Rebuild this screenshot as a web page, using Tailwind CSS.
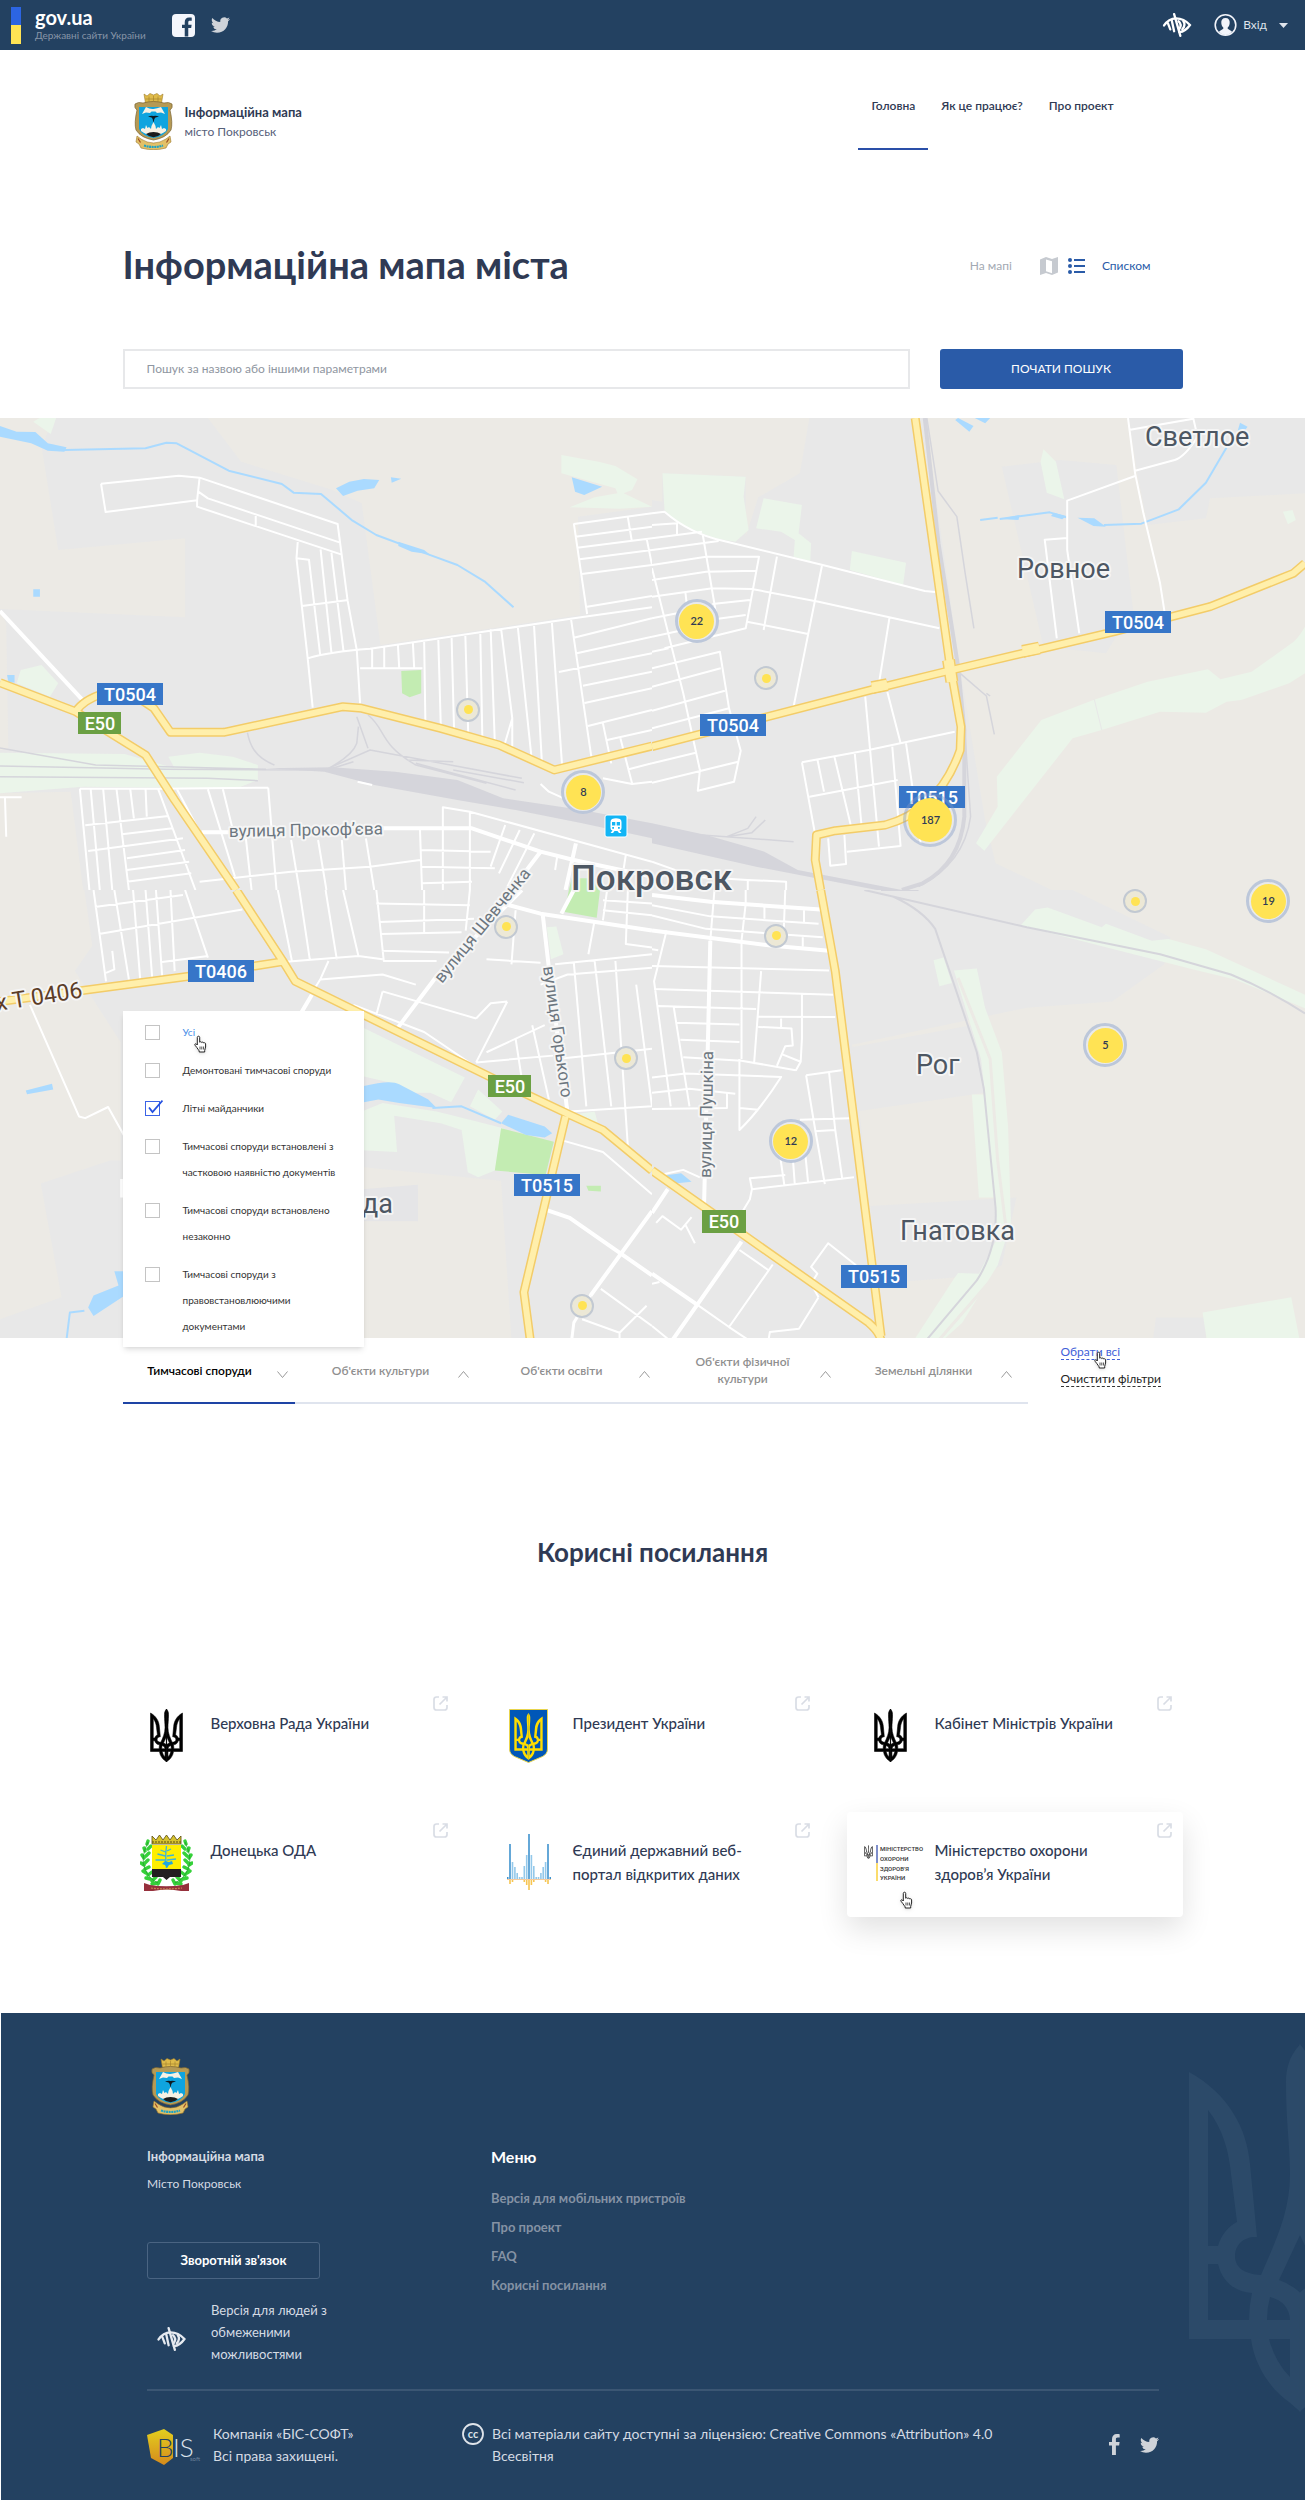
<!DOCTYPE html>
<html lang="uk">
<head>
    <meta charset="UTF-8">
    <meta name="viewport" content="width=device-width, initial-scale=1.0">
    <title>Інформаційна мапа міста</title>
    <script src="https://cdn.jsdelivr.net/npm/@tailwindcss/browser@4"></script>
</head>
<body class="bg-white font-['Lato','Noto_Sans',sans-serif] text-[#2f3a54]">

<!-- Icon sprite -->
<svg class="hidden" aria-hidden="true">
    <symbol id="trident" viewBox="0 0 222 368">
        <path id="trident-half" fill-rule="evenodd" d="M111.500 0C100 12 97 25 97 38C97 80 101 100 101 130C101 170 85 200 72 231C56 230 46 224 46 212C46 200 56 192 68 193L61 120C58 85 40 50 0 28V295H62C66 325 85 348 100 358L111.500 368zM19 66C34 85 40 108 42 130L48 178C38 183 32 192 29 202H19zM19 220H29C34 240 48 248 63 249Q60 262 60 276H19zM111.500 190L90 236Q102 240 111.500 249zM81 253Q100 258 101 276H78Q78 264 81 253zM80 295H101V333Q86 318 80 295z"/>
        <use href="#trident-half" transform="matrix(-1 0 0 1 222 0)"/>
    </symbol>
    <symbol id="twitter" viewBox="0 0 24 20">
        <path transform="translate(0 -2)" d="M23.953 4.57a10 10 0 01-2.825.775 4.958 4.958 0 002.163-2.723c-.951.555-2.005.959-3.127 1.184a4.92 4.92 0 00-8.384 4.482C7.69 8.095 4.067 6.13 1.64 3.162a4.822 4.822 0 00-.666 2.475c0 1.71.87 3.213 2.188 4.096a4.904 4.904 0 01-2.228-.616v.06a4.923 4.923 0 003.946 4.827 4.996 4.996 0 01-2.212.085 4.936 4.936 0 004.604 3.417 9.867 9.867 0 01-6.102 2.105c-.39 0-.779-.023-1.17-.067a13.995 13.995 0 007.557 2.209c9.053 0 13.998-7.496 13.998-13.985 0-.21 0-.42-.015-.63A9.935 9.935 0 0024 4.59z"/>
    </symbol>
    <symbol id="facebook" viewBox="0 0 11 21">
        <path d="M3 21V11.500H0V8h3V5.300C3 2 4.800 0 7.800 0 9.200 0 10.400.1 10.700.2v3.400H8.700C7.200 3.600 6.900 4.300 6.900 5.400V8h3.700l-.5 3.500H6.900V21z"/>
    </symbol>
    <symbol id="eye" viewBox="0 0 30 25">
        <g fill="none" stroke="currentColor" stroke-width="2.400" stroke-linecap="round">
            <path d="M1.500 13C5 7.500 9.500 5.500 14 5.500S24 7.500 28.500 12.500C25 17.500 21.500 19.500 17.500 20"/>
            <path d="M12 1.200L18.500 23.800"/>
            <path d="M5.500 10.500L8 17M9.500 7.500L12 19"/>
            <path d="M16.500 8.500Q20.500 12 17.500 16.500M21.500 8.500Q24.500 12.500 20.500 17"/>
        </g>
    </symbol>
    <symbol id="external" viewBox="0 0 15 15">
        <path d="M6 1H3.500Q1 1 1 3.500V11.500Q1 14 3.500 14H11.500Q14 14 14 11.500V9M9.500 1H14V5.500M14 1L6.500 8.500" fill="none" stroke="#d9dde5" stroke-width="1.700"/>
    </symbol>
    <symbol id="hand" viewBox="0 0 16 18">
        <path d="M5.500 1.200c.7 0 1.200.5 1.200 1.200v4.800c.2-.7 1.900-.6 2 .3.4-.7 1.900-.4 2 .5.500-.5 1.900-.2 1.900.8v3.300c0 1.400-.9 2-.9 3.300V17H6.200v-1.100c-.9-1-1.400-2.200-2.300-3.300L2 10.200c-.7-1 .5-1.900 1.300-1.200l1 1V2.400c0-.7.500-1.200 1.200-1.200z" fill="#fff" stroke="#222" stroke-width="1"/>
        <path d="M7 11.500v3M8.800 11.500v3M10.600 11.500v3" stroke="#222" stroke-width=".8"/>
    </symbol>
    <symbol id="coat" viewBox="0 0 39 57">
        <path d="M10 1l3 2 3-2.500 3.500 1.500L23 .5 26 3l3-2-1.500 9h-16z" fill="#dfbb4a" stroke="#a07c28" stroke-width=".6"/>
        <path d="M11.500 6h16M15 3.500v5M19.500 3v5M24 3.500v5" stroke="#a07c28" stroke-width=".6"/>
        <path d="M1 11Q4 8.500 9 10q5-1.500 10.500-1.500T30 10q5-1.500 8 1 1 4-2 6 3 13 1 20-5 8-17.500 10Q7 45 2 37 0 30 3 17 0 15 1 11z" fill="#b59a55" stroke="#7a6330" stroke-width=".7"/>
        <path d="M5 14h29v22q-3 7-14.500 9Q8 43 5 36z" fill="#0fa4df"/>
        <path d="M8 21l4-7q4 2.500 7.500 2T27 14l4 7-4-1.500-4 .5-1.500-1.500h-4L16 20l-4-.5z" fill="#f7f1e4"/>
        <path d="M14 23.500q3-1 5.500-.5 2.500-.5 5.500.5l-3.500 1-2 2-2-2z" fill="#0d1a22"/>
        <path d="M18.500 25l1 5 1-5" fill="#0d1a22"/>
        <path d="M7 38v-2l2-1 2 1 1-4 1.500 3 1.500-1 2 2 .5-3 2-4 2 4 .5 3 2-2 1.500 1L27 32l1 4 2-1 2 1v2q-5 4-12.500 4.500Q12 42 7 38z" fill="#f7f1e4"/>
        <path d="M12 41q3-2 7.500-2t7.500 2q-3 3-7.500 3.300Q15 44 12 41z" fill="#1c1c1c"/>
        <path d="M3 43l4 3q6 4 12.500 4T32 46l4-3 1 6-3 2-2 4q-6 1.700-12.500 1.700T7 55l-2-4-3-2z" fill="#e2c168" stroke="#9a7628" stroke-width=".6"/>
        <path d="M10 52.500q9.500 3 19 0" fill="none" stroke="#1ba3c6" stroke-width="2.200" stroke-dasharray="2 .6"/>
        <path d="M4 45.500l2.500 4M35 45.500l-2.500 4" stroke="#9c4a24" stroke-width="1.200"/>
    </symbol>
</svg>

<!-- Top bar -->
<div class="flex h-[50px] items-center bg-[#234161] px-[11px] text-white">
    <a href="#" class="flex items-center gap-[14px]">
        <svg class="h-[37px] w-[10px]" viewBox="0 0 10 37" aria-hidden="true">
            <rect width="10" height="18" fill="#2c65e3"/>
            <rect y="18" width="10" height="19" fill="#ffe354"/>
        </svg>
        <span class="flex flex-col">
            <span class="text-xl leading-5 font-bold">gov.ua</span>
            <span class="text-[10px] leading-4 text-[#8795a8]">Державні сайти України</span>
        </span>
    </a>
    <a href="#" aria-label="Facebook" class="ml-[26px] flex h-[23px] w-[23px] items-end justify-center rounded bg-[#f4f6fc] pl-2">
        <svg class="h-5 w-[10px] fill-[#234161]"><use href="#facebook"/></svg>
    </a>
    <a href="#" aria-label="Twitter" class="ml-4"><svg class="h-4 w-[19px] fill-[#cfd3d9]"><use href="#twitter"/></svg></a>
    <button type="button" aria-label="Версія для людей з обмеженими можливостями" class="mr-[22px] ml-auto">
        <svg class="h-6 w-[30px] text-white"><use href="#eye"/></svg>
    </button>
    <button type="button" class="flex items-center pr-1.5 text-xs text-[#dfe4ec]">
        <svg class="mr-1.5 h-6 w-[23px]" viewBox="0 0 23 24" aria-hidden="true">
            <circle cx="11.500" cy="12" r="10.300" fill="none" stroke="#f2f4fa" stroke-width="1.600"/>
            <path d="M11.500 5C8.500 5 7 7 7.300 10c.2 2 .9 3.500 2 4.500v1.300L5 18.500Q7.500 22 11.500 22t6.500-3.500l-4.300-2.700v-1.300c1.100-1 1.800-2.500 2-4.500C16 7 14.500 5 11.500 5z" fill="#f2f4fa"/>
        </svg>
        Вхід
        <svg class="ml-3 h-[5px] w-[9px] fill-[#dfe4ec]" viewBox="0 0 9 5" aria-hidden="true"><path d="M0 0h9L4.500 5z"/></svg>
    </button>
</div>

<!-- Header -->
<header class="mx-auto flex max-w-[1060px] items-start justify-between pt-[43px] pr-14 pl-[11px]">
    <a href="#" class="flex items-center gap-3">
        <svg class="h-[57px] w-[39px]"><use href="#coat"/></svg>
        <span class="flex flex-col">
            <span class="text-[13px] leading-5 font-bold">Інформаційна мапа</span>
            <span class="text-xs leading-5 text-[#56607a]">місто Покровськ</span>
        </span>
    </a>
    <nav class="flex text-xs leading-[18px] font-semibold">
        <a href="#" class="h-[57px] border-b-2 border-[#2a4fa8] px-[13px] pt-1">Головна</a>
        <a href="#" class="px-[13px] pt-1">Як це працює?</a>
        <a href="#" class="px-[13px] pt-1">Про проект</a>
    </nav>
</header>

<main>
    <div class="mx-auto max-w-[1060px]">
        <div class="mt-[90px] flex items-center justify-between pr-8">
            <h1 class="text-[38px] leading-[48px] font-bold">Інформаційна мапа міста</h1>
            <div class="flex items-center pt-1 text-xs">
                <a href="#" class="text-[#a3a9b3]">На мапі</a>
                <svg class="ml-7 h-[18px] w-[18px]" viewBox="0 0 18 18" aria-hidden="true">
                    <path fill-rule="evenodd" d="M0 2.500L6 0l6 2L18 0v15.500L12 18l-6-2-6 2zM6 2.500v11.700l6 2V4.300z" fill="#c6cad0"/>
                </svg>
                <svg class="ml-[10px] h-4 w-[17px] fill-[#2a5ba8]" viewBox="0 0 17 16" aria-hidden="true">
                    <circle cx="2" cy="2" r="2"/><circle cx="2" cy="8" r="2"/><circle cx="2" cy="14" r="2"/>
                    <path d="M6 1h11v2H6zM6 7h11v2H6zM6 13h11v2H6z"/>
                </svg>
                <a href="#" class="ml-[17px] text-[#2a5ba8]">Списком</a>
            </div>
        </div>
        <form class="mt-[61px] mb-[29px] flex gap-[30px]">
            <input type="search" aria-label="Пошук за назвою або іншими параметрами" placeholder="Пошук за назвою або іншими параметрами"
                   class="h-10 grow border-2 border-[#e7e8ea] px-[22px] pb-px text-xs placeholder:text-[#8f96a1] focus:outline-none">
            <button type="submit" class="h-10 w-[243px] rounded-[3px] bg-[#2a5ba8] text-xs text-white">ПОЧАТИ ПОШУК</button>
        </form>
    </div>

    <!-- Map -->
    <section class="relative overflow-hidden" aria-label="Мапа">
        <svg class="block h-auto w-full" viewBox="0 418 1305 920" aria-hidden="true">
            <rect y="418" width="1305" height="920" fill="#e8e8e8"/>

            <!-- north-west tile -->
            <svg y="410" width="652" height="480" viewBox="0 0 1568 1440" preserveAspectRatio="none">
                <path fill="#eceae5" d="M0 24H130L100 110 140 420 445 385V622L0 597zM500 24L580 155 800 240 870 280 915 705 1395 615 1390 320 1568 290V24zM0 600L15 640 20 1020H0zM0 1150L170 1145 200 1440H0z"/>
                <path fill="#ebf5ea" d="M80 35L95 24H135L122 72zM1350 135L1440 155 1480 168 1533 208 1520 240 1500 250 1568 290 1490 296 1370 292 1430 262 1485 250 1480 235 1350 190zM50 780L100 765 140 820 120 860 40 820zM0 1028L300 1032 420 1075 405 1040 480 1028 560 1040 620 1065V1110L570 1135 200 1130 0 1150z"/>
                <path fill="#c3ecb2" d="M965 783L1013 780V850L985 862 967 850zM1375 1405H1440V1440H1368z"/>
                <path fill="#aadaff" d="M0 48L40 65 85 66 115 100 160 112 155 125 115 122 75 100 0 80zM808 235L840 215 875 207 912 210 900 235 860 242 825 258zM940 202L965 206 942 218zM1375 202L1448 230 1405 255 1383 245zM958 395L1020 420 1033 433 990 425 958 408zM80 538h16v22h-16zM17 795H35V818L20 815z"/>
                <path fill="#d5d5db" d="M640 1075L800 1072 950 1085 1100 1110 1210 1165 1400 1200 1568 1240V1285L1400 1240 1240 1200 1100 1170 900 1125 780 1085z"/>
                <g fill="none" stroke-linejoin="round">
                    <path vector-effect="non-scaling-stroke" stroke="#aadaff" stroke-width="2" d="M155 120L350 115 400 98 425 100 550 182 678 222 706 248 772 252 848 332 905 375 1030 433 1100 465 1165 514 1235 592"/>
                    <path vector-effect="non-scaling-stroke" stroke="#d5d5db" stroke-width="1.500" d="M0 1014L230 1065 640 1078M0 1068L400 1078 800 1080M0 1100L500 1105 620 1112M595 968C600 1000 610 1040 660 1065M858 920L885 1015M885 915C930 960 910 1000 1000 1065L1170 1120M862 950L858 1000C850 1030 820 1055 790 1075L890 1020 1255 1105M980 1050L1090 1055M1000 1060L1240 1140M1090 1080L1260 1118M850 1055L800 1075"/>
                    <path vector-effect="non-scaling-stroke" stroke="#fff" stroke-width="2" d="M243 221L430 197 480 203 812 342 836 572 858 720 866 880M243 221L254 306 474 271 480 203M476 244L500 265 818 398M474 271V290L822 434M615 318V348M716 396L713 445 740 745 752 893M713 445L743 449 770 735M771 418L797 728M797 428L826 722M726 588L838 570M740 745Q790 725 890 716L1380 625 1568 592M866 775H1016M895 716V772M924 712V772M957 706L960 772M993 700L996 772M1020 690L1023 935M1054 685L1060 945M1086 680L1092 960M1119 672L1126 970M1155 665L1160 985M1180 658L1190 998M1205 655L1232 925V1015M1232 925L1213 1005M1245 648L1278 1040M1284 640L1303 1052M1327 633L1352 1070M1373 625L1422 1040M1380 340L1412 612M1380 342L1568 310M1384 380L1568 350M1388 413L1568 385M1394 448L1568 420M1399 492L1568 465M1412 590L1568 558M1510 322L1519 390M1555 385L1568 465M1380 683L1568 625M1387 730L1568 680M1344 786L1568 730M1402 827L1568 785M1406 879L1568 835M1414 948L1568 900M1450 940L1470 1060M1460 990L1568 960M1492 985L1520 1120M1512 1078L1568 1060M1450 1105L1520 1122 1568 1115M1300 1122L1320 1145 1400 1190M860 1115L895 1125M192 1136H380L645 1133M192 1136L215 1440M218 1136L240 1440M248 1135L270 1440M280 1135L310 1440M313 1135L322 1225M350 1135L353 1220M380 1136L470 1440M425 1136L480 1265M205 1246L405 1218M212 1323L440 1285M293 1273L415 1255M305 1345L445 1320M305 1380L455 1355M305 1415L460 1390M500 1138L565 1400M536 1138L560 1260M645 1133L665 1440M590 1270L605 1440M480 1415L700 1385 890 1370 1010 1350M700 1290L720 1440M765 1290L785 1440M822 1290L832 1440M880 1285L900 1440M1010 1258L1015 1440M1065 1440V1192L1130 1205V1440M1013 1320L1180 1325M1013 1370L1190 1375M1015 1420L1135 1415M1130 1205L1568 1355M1215 1245L1180 1370M1250 1260L1200 1390M1285 1270L1220 1430M1340 1340L1335 1380M1505 1335L1500 1375M0 1162H52M12 1165L15 1280"/>
                    <path vector-effect="non-scaling-stroke" stroke="#fff" stroke-width="4" d="M0 603L200 872M485 1267H570M905 1255H1135L1300 1325 1380 1350 1568 1400M1385 1300L1360 1440M1300 1325L1230 1440"/>
                    <path id="nw-highway" vector-effect="non-scaling-stroke" d="M0 818L182 905 350 1035 420 1170 568 1440M182 905Q200 870 250 850L340 870 370 895 410 967H538L825 890 870 895 1060 955 1200 1005 1333 1080 1568 1008"/>
                    <g stroke="#f3cc68" stroke-width="9"><use href="#nw-highway"/></g>
                    <g stroke="#ffefab" stroke-width="6"><use href="#nw-highway"/></g>
                </g>
            </svg>

            <!-- north-east tile -->
            <svg x="652" y="410" width="653" height="480" viewBox="0 0 1568 1440" preserveAspectRatio="none">
                <path fill="#eceae5" d="M0 24H378L355 190 255 262 225 380V200L25 190V275L0 270zM655 24L740 780 800 1230 825 1360 960 1440H1568V250L1340 265 1330 325 1190 345 1165 190 1145 24z"/>
                <path fill="#e8e8e8" d="M840 170L980 150 1115 165 1155 600 1090 730 940 710z"/>
                <path fill="#ebf5ea" d="M25 190L225 200 220 260 232 360 200 395 150 385 60 340 30 300zM268 265L360 285 352 370 382 400 380 455 340 440 343 390 310 365 250 355zM480 423L610 458 603 525 475 480zM940 118L970 155 990 268 948 248 933 155zM1515 305L1538 300 1546 330 1527 343zM1568 650Q1550 690 1530 705L1440 785 1365 808 1335 778 1190 815 1060 870 935 930 828 1100 830 1190 778 1300 798 1322 1010 985 1080 960 1220 905 1330 908 1380 875 1415 870 1530 820 1568 790z"/>
                <path fill="#aadaff" d="M728 30L735 24 772 48 762 65zM775 24H812L800 40zM835 327L883 315 880 330zM958 318L965 308 995 318 985 328zM1022 323L1062 325 1090 350 1060 348zM1412 38L1430 50 1418 72 1405 68z"/>
                <path fill="#d5d5db" d="M0 1240L130 1275 270 1325 350 1380 600 1440H540L250 1370 0 1300z"/>
                <g fill="none" stroke-linejoin="round">
                    <path vector-effect="non-scaling-stroke" stroke="#aadaff" stroke-width="2" d="M788 330L830 323M835 327L955 307 995 322M1085 345L1175 341 1265 298 1330 218 1380 112 1418 60"/>
                    <path vector-effect="non-scaling-stroke" stroke="#d5d5db" stroke-width="4" d="M655 24L688 400 735 770 750 960V1220Q740 1360 650 1420L600 1440"/>
                    <path vector-effect="non-scaling-stroke" stroke="#d5d5db" stroke-width="1.500" d="M660 24L687 243 732 320 752 490 773 655M740 790L803 858 822 973M803 850L812 858M752 980L765 1220Q750 1360 640 1430M180 1280L230 1255 250 1220M120 1275L340 1295M180 1280L240 1268 272 1230"/>
                    <path vector-effect="non-scaling-stroke" stroke="#e8e8e8" stroke-width="1" d="M1062 868L1080 960"/>
                    <path vector-effect="non-scaling-stroke" stroke="#fff" stroke-width="2" d="M1143 24L1160 190 1180 310 1220 520 1235 640M1145 60L1300 26 1310 80Q1280 140 1255 150L1160 182M1160 198L997 272V420L1026 670M997 384L943 389 972 685M0 310L30 305Q90 370 170 392L410 465 655 543 680 546M0 345L60 340V372M0 385L120 365M0 420L160 393M0 465L130 440H257L225 655 30 715M0 510L130 485 250 482M0 560L145 535 240 537 400 575 690 655M122 375L155 620M300 440L268 660M408 468L340 890M228 635L375 672M145 582L235 570M150 628L225 615M570 625L545 820M0 475L45 700 75 850 115 1080 110 1142 197 1115 213 1022 185 895 163 725 0 775M0 625L60 610M0 680L150 640M0 725L40 715M80 545L85 600M0 830L165 775M0 902L175 842M0 955L185 895M0 1060L105 1028M0 1118L207 1055M512 860L545 1310M565 845L597 1000M610 1000L645 1300M360 1057L520 1020 727 965M360 1057L392 1275M378 1160L590 1110M397 1047L413 1145M438 1040L480 1260M487 1032L503 1245M577 1010L597 1310M468 1325L597 1308M423 1285L428 1367 466 1362 462 1275M0 1355L100 1400 230 1410 322 1415V1440M230 1410V1440"/>
                    <path id="ne-highway" vector-effect="non-scaling-stroke" d="M632 24L715 760 742 950 740 1020Q690 1200 560 1245L440 1262 395 1275 392 1350 405 1440M0 1010L540 835 720 780 1110 665 1340 590 1540 490 1568 460"/>
                    <path id="ne-junction" vector-effect="non-scaling-stroke" d="M528 833L565 824M890 724L930 714M712 750L720 815"/>
                    <g stroke="#f3cc68" stroke-width="9"><use href="#ne-highway"/></g>
                    <g stroke="#f3cc68" stroke-width="13"><use href="#ne-junction"/></g>
                    <g stroke="#ffefab" stroke-width="10"><use href="#ne-junction"/></g>
                    <g stroke="#ffefab" stroke-width="6"><use href="#ne-highway"/></g>
                </g>
            </svg>

            <!-- south-west tile -->
            <svg y="890" width="652" height="530" viewBox="0 0 1568 1568" preserveAspectRatio="none">
                <path fill="#eceae5" d="M0 0H203L222 165 180 240 290 450V800H265L98 868 148 1205 0 1270zM875 820L1205 860 1230 1330H875z"/>
                <path fill="#e5e5e7" d="M870 885L1005 872V980H870z"/>
                <path fill="#ebf5ea" d="M870 405L1118 555 1085 628 1035 600 960 600 940 570 870 550zM870 655L920 630 1050 655 1130 680 1210 705 1190 830 1150 850 1125 835 1110 710 1060 690 948 668 955 775 870 770zM1150 590L1208 655 1190 680 1130 640zM1315 110L1338 108 1355 190 1325 205zM1375 665L1430 655 1440 700z"/>
                <path fill="#c3ecb2" d="M1368 0H1443L1435 82 1358 65zM1205 705L1332 745 1312 843 1190 830zM1410 875L1445 875V892L1415 890z"/>
                <path fill="#aadaff" d="M875 580Q940 560 960 575L1030 620 1050 645 960 630 910 620 875 628zM1222 665L1310 700 1328 720 1310 732 1265 725 1205 690zM62 593L125 573 128 590 65 604zM275 1128H300V1200L225 1260 212 1235 225 1200 285 1170z"/>
                <g fill="none" stroke-linejoin="round">
                    <path vector-effect="non-scaling-stroke" stroke="#aadaff" stroke-width="2" d="M1040 645L1110 640 1205 690M160 1330L168 1250 203 1245"/>
                    <path vector-effect="non-scaling-stroke" stroke="#fff" stroke-width="2" d="M72 340L190 670 205 675 260 642 300 730M225 0L255 270M238 130L583 58M228 50L440 15M275 0L310 265M320 0L337 262M350 0L366 260M375 0L390 255M410 0L420 240M445 0L500 200M390 213L500 195M255 245L275 235 270 180M668 0L702 210M720 0L745 205M783 0L810 205M825 0L862 195 920 205M680 213L862 195M790 210L770 265 920 250 1000 280M905 0L923 210 1050 210M905 40L1130 45M912 95L1140 85M915 130L1110 125M918 180L1080 185M750 305L770 265M1020 0V130M1130 0L1120 120M920 300L1145 380M905 370L920 300M1220 330L1145 510M1220 330L1180 335 1145 380M1170 205L1300 215M1240 60L1230 220M1300 280L1365 250 1568 230M1335 220L1568 190M1380 215L1410 640M1430 90L1415 190M1430 210L1470 640M1480 210L1510 760M1530 280L1568 640M1340 500L1568 470M1370 655L1568 640M1350 740L1450 775 1568 900M1445 1180L1568 1290M1400 1270L1490 1310V1330M1490 1310L1555 1230M1170 480L1310 400M1145 510L1330 490M1280 400L1320 620M1240 440L1260 600M1510 0L1505 160 1568 170M1460 0L1450 90M1450 30L1568 40M1450 60L1568 75M850 340L1020 420 1140 520"/>
                    <path vector-effect="non-scaling-stroke" stroke="#fff" stroke-width="4" d="M750 310L725 362M955 410L1050 255 1255 0M1210 40L1300 70 1568 120M1305 70L1320 230 1365 660M1310 945L1370 970 1568 1140M1568 950L1420 1200M294 855V910M1380 0L1350 70"/>
                    <path vector-effect="non-scaling-stroke" stroke="#fff" stroke-width="3" d="M1420 1200L1380 1280 1375 1330"/>
                    <path id="sw-highway" vector-effect="non-scaling-stroke" d="M568 0L680 210 710 270 1190 560 1370 665 1450 710 1568 830M0 330L455 255 680 212M1360 670L1260 1190 1275 1330"/>
                    <g stroke="#f3cc68" stroke-width="9"><use href="#sw-highway"/></g>
                    <g stroke="#ffefab" stroke-width="6"><use href="#sw-highway"/></g>
                </g>
            </svg>

            <!-- south-east tile -->
            <svg x="652" y="890" width="653" height="530" viewBox="0 0 1568 1568" preserveAspectRatio="none">
                <path fill="#eceae5" d="M1010 0L1245 140 1230 220 1105 330 900 348 480 458 560 1330H1568V0z"/>
                <path fill="#e8e8e8" d="M480 465L790 395 800 600 490 655zM525 935L875 910 840 1110 790 1140 545 1165zM1210 1265H1330V1330H1203z"/>
                <path fill="#ebf5ea" d="M885 105L920 58 950 52 1080 110 1090 100 1200 150 1240 145 1330 175 1568 310V350L1400 265 1300 235zM676 208L700 200 720 275 690 285zM725 238L780 232 800 350 840 480 855 700 862 985 830 1110 745 1280 700 1330H630L725 1150 735 1133 785 1135 825 1040 825 910H785L768 605H800L790 500zM1322 1250L1535 1205 1555 1330H1332z"/>
                <path fill="#aadaff" d="M30 845L70 838 95 863 55 868z"/>
                <g fill="none" stroke-linejoin="round">
                    <path vector-effect="non-scaling-stroke" stroke="#eceae5" stroke-width="3" d="M735 260L812 500 830 800 850 1000M810 1160L690 1330"/>
                    <path vector-effect="non-scaling-stroke" stroke="#d5d5db" stroke-width="2" d="M510 0L900 110 1220 190 1390 250Q1480 295 1568 365M580 20Q650 60 680 115L720 260 780 480 797 590 825 940Q830 1060 780 1155L660 1330M550 0H640"/>
                    <path vector-effect="non-scaling-stroke" stroke="#fff" stroke-width="2" d="M150 0L140 150M225 0V40L215 150V500M320 0L315 165M0 45L140 78 400 100M0 75L130 115 410 140M270 50V85M365 60V95M362 140V168M35 120L5 270 45 640M0 175L15 178M0 225L425 238M5 293L435 310M15 343L250 352M52 345L90 640M58 393L210 398M68 443L210 450M75 495L215 505 345 533M210 500V710Q260 650 310 553L80 543 0 555M262 240L245 515M360 310V440L357 508 345 535M255 375L440 376M310 380V405M255 405L335 410 338 460 320 462 300 520M310 485L357 508M0 600L90 588 200 603M0 648L180 645V603M210 645L255 650M370 548L455 533M370 548L392 710 415 870M425 538L440 710 457 857M355 680L475 675M390 714L440 710M485 850L240 885 235 853 320 843M308 790L318 875M338 790L343 873M368 780L375 868M240 885L235 915 218 950M30 840L75 828 115 850M210 1065L280 1125M290 1108L185 1293M280 1330L283 1308 353 1298 400 1205M110 1228L185 1293 230 1330M490 1110L423 1045 382 1115 397 1135 382 1165 400 1205M10 985L25 965 70 1005 95 968M80 990L103 1045M0 1165L18 1160M0 1290L40 1330"/>
                    <path vector-effect="non-scaling-stroke" stroke="#fff" stroke-width="4" d="M0 15L140 35 405 58M0 120L290 165 425 180M140 150L125 935M215 1040L50 1330M0 1135L110 1228M38 885L0 955"/>
                    <path id="se-highway" vector-effect="non-scaling-stroke" d="M405 0L430 170 440 240 550 1320M0 830L520 1280Q548 1310 550 1335"/>
                    <g stroke="#f3cc68" stroke-width="9"><use href="#se-highway"/></g>
                    <g stroke="#ffefab" stroke-width="6"><use href="#se-highway"/></g>
                </g>
            </svg>

            <!-- place and street names -->
            <g class="font-['Roboto',sans-serif]" fill="#4d5763" stroke="#f5f5f5" stroke-width="4" stroke-linejoin="round" paint-order="stroke" font-size="27">
                <text x="1145" y="446">Светлое</text>
                <text x="1017" y="578">Ровное</text>
                <text x="571" y="890" font-size="35" font-weight="500">Покровск</text>
                <text x="916" y="1074">Рог</text>
                <text x="900" y="1240">Гнатовка</text>
                <text x="362" y="1213">да</text>
                <g font-size="17" fill="#6d7780">
                    <text transform="translate(229 837) rotate(-1)">вулиця Прокоф’єва</text>
                    <text transform="translate(442 984) rotate(-51)">вулиця Шевченка</text>
                    <text transform="translate(543 967) rotate(82)">вулиця Горького</text>
                    <text transform="translate(711 1178) rotate(-89)">вулиця Пушкіна</text>
                </g>
                <text transform="translate(-3 1011) rotate(-9)" font-size="23" fill="#5c3d28">х Т 0406</text>
            </g>

            <!-- road numbers -->
            <g class="font-['Roboto',sans-serif]" font-size="18" font-weight="500" text-anchor="middle">
                <path fill="#3776c8" d="M97 683h66v22H97zM700 714h66v22H700zM899 786h66v22H899zM1105 611h66v22H1105zM188 960h66v22H188zM514 1174h66v22H514zM841 1265h66v23H841z"/>
                <path fill="#6ba043" d="M78 712h43v22H78zM488 1075h43v22H488zM702 1210h44v23H702z"/>
                <g fill="#fff">
                    <text x="130" y="701">T0504</text>
                    <text x="733" y="732">T0504</text>
                    <text x="932" y="804">T0515</text>
                    <text x="1138" y="629">T0504</text>
                    <text x="221" y="978">T0406</text>
                    <text x="547" y="1192">T0515</text>
                    <text x="874" y="1283">T0515</text>
                    <text x="100" y="730">E50</text>
                    <text x="510" y="1093">E50</text>
                    <text x="724" y="1228">E50</text>
                </g>
            </g>

            <!-- railway station -->
            <g transform="translate(605 815)">
                <rect width="22" height="22" rx="2" fill="#12b5f5" stroke="#fff"/>
                <path fill="#fff" fill-rule="evenodd" d="M7 4Q11 2.500 15 4 16.500 5 16.500 7V13Q16.500 15 14.500 15.500L16.500 18H14L12.500 16H9.500L8 18H5.500L7.500 15.500Q5.500 15 5.500 13V7Q5.500 5 7 4zM7 7V10.500H10.300V7zM11.700 7V10.500H15V7zM7.200 12v1.700H9V12zM13 12v1.700h1.800V12z"/>
            </g>
        </svg>

        <!-- clusters -->
        <button type="button" style="left:53.4%;top:22.1%" class="absolute flex size-11 -translate-1/2 items-center justify-center rounded-full border-3 border-[#bcc7da] bg-[#e9eaeb]"><span class="flex size-[35px] items-center justify-center rounded-full bg-[#ffe354] text-[11px] font-semibold">22</span></button>
        <button type="button" style="left:44.7%;top:40.7%" class="absolute flex size-11 -translate-1/2 items-center justify-center rounded-full border-3 border-[#bcc7da] bg-[#e9eaeb]"><span class="flex size-[35px] items-center justify-center rounded-full bg-[#ffe354] text-[11px] font-semibold">8</span></button>
        <button type="button" style="left:71.3%;top:43.7%" class="absolute flex size-[54px] -translate-1/2 items-center justify-center rounded-full border-3 border-[#7c95c6]/40"><span class="flex size-11 items-center justify-center rounded-full bg-[#ffe354] text-[11px] font-semibold">187</span></button>
        <button type="button" style="left:97.2%;top:52.5%" class="absolute flex size-11 -translate-1/2 items-center justify-center rounded-full border-3 border-[#bcc7da] bg-[#e9eaeb]"><span class="flex size-[35px] items-center justify-center rounded-full bg-[#ffe354] text-[11px] font-semibold">19</span></button>
        <button type="button" style="left:84.7%;top:68.2%" class="absolute flex size-11 -translate-1/2 items-center justify-center rounded-full border-3 border-[#bcc7da] bg-[#e9eaeb]"><span class="flex size-[35px] items-center justify-center rounded-full bg-[#ffe354] text-[11px] font-semibold">5</span></button>
        <button type="button" style="left:60.6%;top:78.6%" class="absolute flex size-11 -translate-1/2 items-center justify-center rounded-full border-3 border-[#bcc7da] bg-[#e9eaeb]"><span class="flex size-[35px] items-center justify-center rounded-full bg-[#ffe354] text-[11px] font-semibold">12</span></button>
        <!-- single points -->
        <button type="button" aria-label="Об'єкт" style="left:35.9%;top:31.7%" class="absolute flex size-6 -translate-1/2 items-center justify-center rounded-full border-2 border-[#c2c9d2] bg-[#ece8d6]"><span class="size-[9px] rounded-full bg-[#ffe354]"></span></button>
        <button type="button" aria-label="Об'єкт" style="left:58.7%;top:28.3%" class="absolute flex size-6 -translate-1/2 items-center justify-center rounded-full border-2 border-[#c2c9d2] bg-[#ece8d6]"><span class="size-[9px] rounded-full bg-[#ffe354]"></span></button>
        <button type="button" aria-label="Об'єкт" style="left:87%;top:52.5%" class="absolute flex size-6 -translate-1/2 items-center justify-center rounded-full border-2 border-[#c2c9d2] bg-[#ece8d6]"><span class="size-[9px] rounded-full bg-[#ffe354]"></span></button>
        <button type="button" aria-label="Об'єкт" style="left:59.5%;top:56.3%" class="absolute flex size-6 -translate-1/2 items-center justify-center rounded-full border-2 border-[#c2c9d2] bg-[#ece8d6]"><span class="size-[9px] rounded-full bg-[#ffe354]"></span></button>
        <button type="button" aria-label="Об'єкт" style="left:38.8%;top:55.3%" class="absolute flex size-6 -translate-1/2 items-center justify-center rounded-full border-2 border-[#c2c9d2] bg-[#ece8d6]"><span class="size-[9px] rounded-full bg-[#ffe354]"></span></button>
        <button type="button" aria-label="Об'єкт" style="left:48%;top:69.6%" class="absolute flex size-6 -translate-1/2 items-center justify-center rounded-full border-2 border-[#c2c9d2] bg-[#ece8d6]"><span class="size-[9px] rounded-full bg-[#ffe354]"></span></button>
        <button type="button" aria-label="Об'єкт" style="left:44.6%;top:96.5%" class="absolute flex size-6 -translate-1/2 items-center justify-center rounded-full border-2 border-[#c2c9d2] bg-[#ece8d6]"><span class="size-[9px] rounded-full bg-[#ffe354]"></span></button>
    </section>

    <!-- Filters -->
    <section class="relative mx-auto flex max-w-[1060px] items-start justify-between">
        <div class="absolute bottom-[57px] left-0 flex w-[241px] flex-col gap-3 bg-white py-2 pr-3 pl-[22px] text-[10px] leading-[26px] text-[#333] shadow-md">
            <label class="relative flex items-start gap-[23px]">
                <input type="checkbox" class="mt-1.5 size-[15px] shrink-0 appearance-none border border-[#c4c4c4]">
                <span class="text-[#4a8fe8]">Усі</span>
                <svg class="absolute top-4 left-12 h-[18px] w-4 drop-shadow"><use href="#hand"/></svg>
            </label>
            <label class="flex items-start gap-[23px]">
                <input type="checkbox" class="mt-1.5 size-[15px] shrink-0 appearance-none border border-[#c4c4c4]">
                <span>Демонтовані тимчасові споруди</span>
            </label>
            <label class="relative flex items-start gap-[23px]">
                <input type="checkbox" checked class="peer mt-1.5 size-[15px] shrink-0 appearance-none border border-[#c4c4c4] checked:border-[#3b63e6]">
                <svg class="absolute top-1 left-0 hidden h-4 w-[18px] peer-checked:block" viewBox="0 0 18 16" aria-hidden="true"><path d="M4 8.500L7.500 13 17.500 1.500" fill="none" stroke="#2450e0" stroke-width="1.800"/></svg>
                <span>Літні майданчики</span>
            </label>
            <label class="flex items-start gap-[23px]">
                <input type="checkbox" class="mt-1.5 size-[15px] shrink-0 appearance-none border border-[#c4c4c4]">
                <span>Тимчасові споруди встановлені з частковою наявністю документів</span>
            </label>
            <label class="flex items-start gap-[23px]">
                <input type="checkbox" class="mt-1.5 size-[15px] shrink-0 appearance-none border border-[#c4c4c4]">
                <span>Тимчасові споруди встановлено незаконно</span>
            </label>
            <label class="flex items-start gap-[23px]">
                <input type="checkbox" class="mt-1.5 size-[15px] shrink-0 appearance-none border border-[#c4c4c4]">
                <span>Тимчасові споруди з правовстановлюючими документами</span>
            </label>
        </div>

        <div class="relative grid h-[66px] w-[905px] grid-cols-5 border-b-2 border-[#dfe4ee] text-xs leading-[17px] font-semibold text-[#8f8f8f]">
            <button type="button" class="flex items-center text-black">
                <span class="w-[154px] text-center">Тимчасові споруди</span>
                <svg class="mt-2 h-[7px] w-[11px]" viewBox="0 0 11 7" fill="none" stroke="#999" aria-hidden="true"><path d="M.5.500L5.500 6.500 10.500.500"/></svg>
                <span class="absolute -bottom-0.5 left-0 h-0.5 w-[172px] bg-[#1e44a5]"></span>
            </button>
            <button type="button" class="flex items-center">
                <span class="w-[154px] text-center">Об'єкти культури</span>
                <svg class="mt-2 h-[7px] w-[11px]" viewBox="0 0 11 7" fill="none" stroke="#999" aria-hidden="true"><path d="M.5 6.500L5.500.500 10.500 6.500"/></svg>
            </button>
            <button type="button" class="flex items-center">
                <span class="w-[154px] text-center">Об'єкти освіти</span>
                <svg class="mt-2 h-[7px] w-[11px]" viewBox="0 0 11 7" fill="none" stroke="#999" aria-hidden="true"><path d="M.5 6.500L5.500.500 10.500 6.500"/></svg>
            </button>
            <button type="button" class="flex items-center">
                <span class="w-[154px] px-5 text-center">Об'єкти фізичної культури</span>
                <svg class="mt-2 h-[7px] w-[11px]" viewBox="0 0 11 7" fill="none" stroke="#999" aria-hidden="true"><path d="M.5 6.500L5.500.500 10.500 6.500"/></svg>
            </button>
            <button type="button" class="flex items-center">
                <span class="w-[154px] text-center">Земельні ділянки</span>
                <svg class="mt-2 h-[7px] w-[11px]" viewBox="0 0 11 7" fill="none" stroke="#999" aria-hidden="true"><path d="M.5 6.500L5.500.500 10.500 6.500"/></svg>
            </button>
        </div>

        <div class="relative mt-[7px] flex w-[122px] flex-col items-start gap-3 text-xs leading-[14px]">
            <button type="button" class="border-b border-dashed border-[#3f5fd8] text-[#3f5fd8]">Обрати всі</button>
            <button type="button" class="border-b border-dashed border-[#333] text-[#222]">Очистити фільтри</button>
            <svg class="absolute top-1.5 left-8 h-[18px] w-4 drop-shadow"><use href="#hand"/></svg>
        </div>
    </section>

    <!-- Useful links -->
    <section class="mx-auto max-w-[1060px] pt-[130px] pb-24">
        <h2 class="text-center text-[26px] leading-9 font-bold">Корисні посилання</h2>
        <div class="mt-[115px] grid grid-cols-3 gap-x-[26px] gap-y-[22px] text-[15px] leading-6 font-medium">
            <a href="#" class="relative flex h-[105px] items-start rounded">
                <span class="flex w-[88px] shrink-0 justify-center pt-6"><svg class="h-[53px] w-[33px] fill-black stroke-black stroke-4"><use href="#trident"/></svg></span>
                <span class="pt-[26px]">Верховна Рада України</span>
                <svg class="absolute top-[11px] right-[11px] size-[15px]"><use href="#external"/></svg>
            </a>
            <a href="#" class="relative flex h-[105px] items-start rounded">
                <span class="flex w-[88px] shrink-0 justify-center pt-6">
                    <svg class="h-[54px] w-[39px]" viewBox="0 0 39 54" aria-hidden="true">
                        <path d="M.5.500h38V40q0 5-5 7.500L19.500 53.500 5.500 47.500Q.5 45 .5 40z" fill="#0057b8" stroke="#e8d44d"/>
                        <svg x="5" y="4" width="29" height="47" fill="#ffdd00"><use href="#trident"/></svg>
                    </svg>
                </span>
                <span class="pt-[26px]">Президент України</span>
                <svg class="absolute top-[11px] right-[11px] size-[15px]"><use href="#external"/></svg>
            </a>
            <a href="#" class="relative flex h-[105px] items-start rounded">
                <span class="flex w-[88px] shrink-0 justify-center pt-6"><svg class="h-[53px] w-[33px] fill-black stroke-black stroke-4"><use href="#trident"/></svg></span>
                <span class="pt-[26px]">Кабінет Міністрів України</span>
                <svg class="absolute top-[11px] right-[11px] size-[15px]"><use href="#external"/></svg>
            </a>
            <a href="#" class="relative flex h-[105px] items-start rounded">
                <span class="flex w-[88px] shrink-0 justify-center pt-[22px]">
                    <svg class="h-[58px] w-[53px]" viewBox="0 0 53 58" aria-hidden="true">
                        <g fill="none" stroke="#36d13a" stroke-width="3.400" stroke-linecap="round">
                            <path d="M8 7l-1 3M11 12l-3 3M4 14l1 3M9 19l-3 3M2 21l2 3M8 26l-3 3M1 29l3 2M9 33l-4 2M3 37l3 2M12 38l-4 3M6 44l4 1M16 43l-4 4M12 50l5-1M20 46l-2 4"/>
                            <path d="M45 7l1 3M42 12l3 3M49 14l-1 3M44 19l3 3M51 21l-2 3M45 26l3 3M52 29l-3 2M44 33l4 2M50 37l-3 2M41 38l4 3M47 44l-4 1M37 43l4 4M41 50l-5-1M33 46l2 4"/>
                        </g>
                        <path d="M8 8Q0 24 5 35q4 10 13 14M45 8q8 16 3 27-4 10-13 14" fill="none" stroke="#1d9a2a" stroke-width=".7"/>
                        <path d="M12 10V2l4 4 3.500-5 3.500 5 3.500-5L30 6l3.500-5L37 6l4-4v8z" fill="#d6c22e" stroke="#5b4d10" stroke-width=".8"/>
                        <path d="M12 8h29" stroke="#5b4d10" stroke-dasharray="2 1"/>
                        <path d="M12 11h29v25H12z" fill="#ffee00"/>
                        <path d="M12 35h29v8H30l-3.500 3-3.500-3H12z" fill="#231f20"/>
                        <path d="M26.500 12Q25 22 26.500 34M25.500 18l-5-2M27 17l4-2M25.500 22l-8-2M27 22l7-1M25.500 26l-10 0M27 26l9-1" fill="none" stroke="#3db4d8" stroke-width="1.300"/>
                        <path d="M22 30l3-3 4 1 3-1 1 3-4 1-2 3-2-3z" fill="#1fa6e0"/>
                        <path d="M4 49l6 2q16 2.500 33 0l6-2v8h-8q-14-3-28 0H4z" fill="#96303c"/>
                        <path d="M11 54q15 2 31 0" stroke="#c98b52" stroke-width="1.200" stroke-dasharray="2 1" fill="none"/>
                    </svg>
                </span>
                <span class="pt-[26px]">Донецька ОДА</span>
                <svg class="absolute top-[11px] right-[11px] size-[15px]"><use href="#external"/></svg>
            </a>
            <a href="#" class="relative flex h-[105px] items-start rounded">
                <span class="flex w-[88px] shrink-0 justify-center pt-[22px]">
                    <svg class="h-[56px] w-11" viewBox="0 0 44 56" aria-hidden="true">
                        <g stroke-width="1.600">
                            <path stroke="#3f93cf" d="M3 10V45M22 0V45M41 10V45M.7 43v2M43.300 43v2"/>
                            <path stroke="#93c8ea" d="M5.500 28V45M7.900 33V45M10.200 39V45M12.600 43V45M15 43V45M17.300 32V45M19.700 21V45M24.400 21V45M26.800 32V45M29.200 43V45M31.500 43V45M33.900 39V45M36.200 33V45M38.600 28V45"/>
                            <path stroke="#f6c552" d="M3 46v4M5.500 46v2M19.700 46v5M22 46v10M24.400 46v5M17.300 46v2M26.800 46v2M38.600 46v2M41 46v4"/>
                            <path stroke="#f4bd85" stroke-width=".8" d="M0 45.500H44"/>
                        </g>
                    </svg>
                </span>
                <span class="pt-[26px] pr-14">Єдиний державний веб-портал відкритих даних</span>
                <svg class="absolute top-[11px] right-[11px] size-[15px]"><use href="#external"/></svg>
            </a>
            <a href="#" class="relative flex h-[105px] items-start rounded bg-white shadow-[0_12px_30px_rgba(0,0,0,0.12)]">
                <span class="flex w-[88px] shrink-0 justify-center pt-[33px]">
                    <svg class="ml-1.5 h-[37px] w-[60px] font-['Roboto',sans-serif]" viewBox="0 0 60 37" font-size="6" font-weight="500" fill="#333">
                        <svg x="0" y="0" width="9" height="14"><use href="#trident"/></svg>
                        <path d="M12 0h2v18h-2z" fill="#7f8fcb"/>
                        <path d="M12 18h2v18h-2z" fill="#fbdc6c"/>
                        <text x="16" y="6">МІНІСТЕРСТВО</text>
                        <text x="16" y="16">ОХОРОНИ</text>
                        <text x="16" y="26">ЗДОРОВ’Я</text>
                        <text x="16" y="35">УКРАЇНИ</text>
                    </svg>
                </span>
                <span class="pt-[26px] pr-20">Міністерство охорони здоров’я України</span>
                <svg class="absolute top-[11px] right-[11px] size-[15px]"><use href="#external"/></svg>
                <svg class="absolute bottom-2 left-[52px] h-[18px] w-4 drop-shadow"><use href="#hand"/></svg>
            </a>
        </div>
    </section>
</main>

<!-- Footer -->
<footer class="relative ml-px overflow-hidden bg-[#234161] text-[#d5dbe4]">
    <svg class="absolute top-[31px] -right-[106px] h-[368px] w-[222px] fill-[#2c4a69]" aria-hidden="true"><use href="#trident"/></svg>
    <div class="relative mx-auto max-w-[1060px] px-6 pt-[45px] pb-[33px] text-[13px]">
        <svg class="ml-1 h-[57px] w-[39px]"><use href="#coat"/></svg>
        <div class="mt-[31px] flex pb-6">
            <div class="w-[344px]">
                <p class="leading-5 font-bold">Інформаційна мапа</p>
                <p class="mt-2 text-xs leading-5">Місто Покровськ</p>
                <button type="button" class="mt-12 block h-[37px] w-[173px] rounded-[3px] border border-[#4a6482] font-bold text-white">Зворотній зв'язок</button>
                <a href="#" class="mt-5 flex w-[200px] items-start gap-[25px] pl-[10px] leading-[22px]">
                    <svg class="mt-7 h-6 w-[29px] shrink-0 text-[#e6eaf0]"><use href="#eye"/></svg>
                    <span>Версія для людей з обмеженими можливостями</span>
                </a>
            </div>
            <div>
                <h3 class="text-base leading-[22px] font-bold text-white">Меню</h3>
                <ul class="mt-4 text-[13px] leading-[29px] font-bold text-[#8592a4]">
                    <li><a href="#">Версія для мобільних пристроїв</a></li>
                    <li><a href="#">Про проект</a></li>
                    <li><a href="#">FAQ</a></li>
                    <li><a href="#">Корисні посилання</a></li>
                </ul>
            </div>
        </div>
        <div class="flex items-start border-t-2 border-[#3b5673] pt-8 text-sm leading-[22px]">
            <div class="flex w-[315px] items-start gap-3">
                <svg class="mt-1.5 h-9 w-[54px] font-['Lato',sans-serif]" viewBox="0 0 54 36" aria-label="BIS soft">
                    <defs><linearGradient id="gold" x2="0" y2="1"><stop stop-color="#e3cf1e"/><stop offset="1" stop-color="#d58a1c"/></linearGradient></defs>
                    <path d="M0 6L17 0 26 6V29L17 36 4 29z" fill="url(#gold)"/>
                    <text x="10" y="28" font-size="26" fill="#234161" font-weight="300">B</text>
                    <text x="26" y="28" font-size="26" fill="#dce3ec" font-weight="300">IS</text>
                    <text x="43" y="32" font-size="6" fill="#6d829b">soft</text>
                </svg>
                <p>Компанія «БІС-СОФТ»<br>Всі права захищені.</p>
            </div>
            <div class="flex items-start gap-2">
                <svg class="size-[22px] shrink-0 font-['Lato',sans-serif]" viewBox="0 0 22 22" aria-hidden="true">
                    <circle cx="11" cy="11" r="10" fill="none" stroke="#dfe4ea" stroke-width="1.800"/>
                    <text x="11" y="14.500" font-size="11" font-weight="700" text-anchor="middle" fill="#dfe4ea">cc</text>
                </svg>
                <p class="w-[520px]">Всі матеріали сайту доступні за ліцензією: Creative Commons «Attribution» 4.0 Всесвітня</p>
            </div>
            <div class="mt-[11px] ml-auto flex items-center gap-5">
                <a href="#" aria-label="Facebook"><svg class="h-[21px] w-[11px] fill-[#cfd3d9]"><use href="#facebook"/></svg></a>
                <a href="#" aria-label="Twitter"><svg class="h-4 w-[19px] fill-[#cfd3d9]"><use href="#twitter"/></svg></a>
            </div>
        </div>
    </div>
</footer>
</body>
</html>
